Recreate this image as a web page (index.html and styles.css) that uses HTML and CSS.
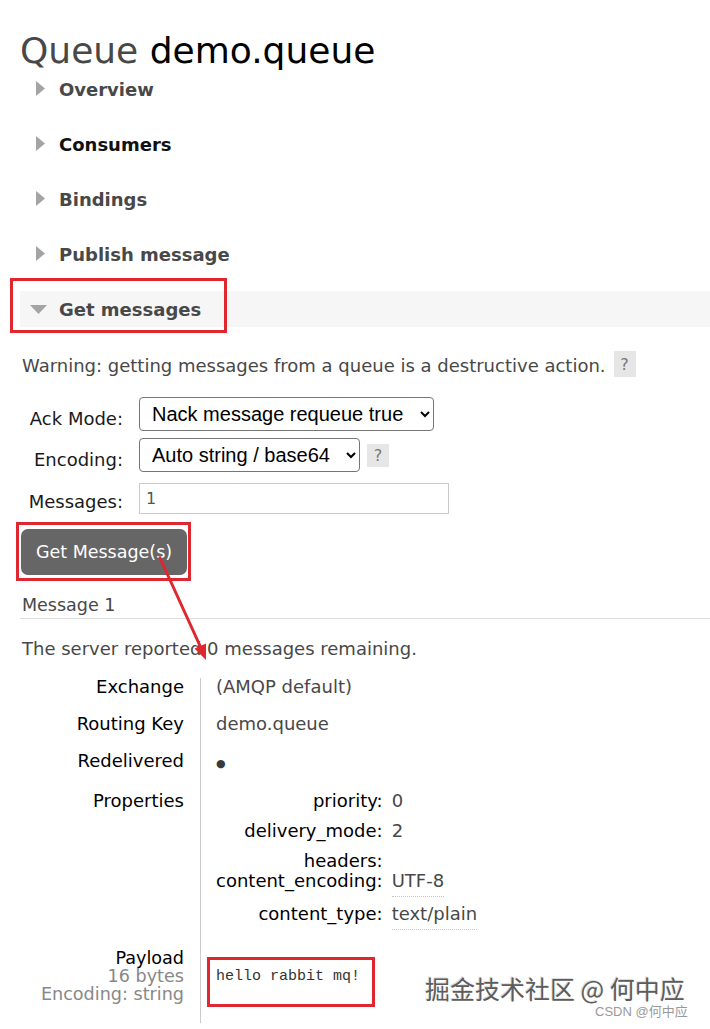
FILE: index.html
```html
<!DOCTYPE html>
<html lang="en">
<head>
<meta charset="utf-8">
<title>Queue demo.queue</title>
<link rel="stylesheet" href="styles.css">
</head>
<body>
<div class="page">
  <h1><span class="kind">Queue</span> demo.queue</h1>

  <div class="sec-head"><svg class="tri" viewBox="0 0 30 18"><polygon points="7,1 16,8.5 7,16"/></svg>Overview</div>
  <div class="sec-head dark"><svg class="tri" viewBox="0 0 30 18"><polygon points="7,1 16,8.5 7,16"/></svg>Consumers</div>
  <div class="sec-head"><svg class="tri" viewBox="0 0 30 18"><polygon points="7,1 16,8.5 7,16"/></svg>Bindings</div>
  <div class="sec-head"><svg class="tri" viewBox="0 0 30 18"><polygon points="7,1 16,8.5 7,16"/></svg>Publish message</div>
  <div class="sec-head open"><svg class="tri" viewBox="0 0 30 18"><polygon points="1,5 18,5 9.5,14"/></svg>Get messages<span class="mark mark-head"></span></div>

  <div class="sec-body">
    <div class="warning"><span class="warning-text">Warning: getting messages from a queue is a destructive action.</span><span class="help">?</span></div>

    <form class="get-form">
      <label class="form-label">Ack Mode:</label>
      <div class="ctrl">
        <select class="select select-ack">
          <option>Nack message requeue true</option>
          <option>Automatic ack</option>
          <option>Reject requeue true</option>
          <option>Reject requeue false</option>
        </select>
      </div>
      <label class="form-label">Encoding:</label>
      <div class="ctrl">
        <select class="select select-enc">
          <option>Auto string / base64</option>
          <option>base64</option>
        </select>
        <span class="help help-sm">?</span>
      </div>
      <label class="form-label">Messages:</label>
      <div class="ctrl">
        <input class="num" type="text" value="1">
      </div>
    </form>

    <div class="btn-wrap">
      <button class="btn" type="button">Get Message(s)</button>
      <span class="mark mark-btn"></span>
    </div>

    <h3 class="msg-title">Message 1</h3>
    <p class="remaining">The server reported 0 messages remaining.</p>

    <table class="msg">
      <tr>
        <th class="k">Exchange</th>
        <td class="v">(AMQP default)</td>
      </tr>
      <tr>
        <th class="k">Routing Key</th>
        <td class="v">demo.queue</td>
      </tr>
      <tr>
        <th class="k">Redelivered</th>
        <td class="v"><span class="dot">●</span></td>
      </tr>
      <tr>
        <th class="k">Properties</th>
        <td class="v">
          <table class="props">
            <tr class="p-row"><th class="pk">priority:</th><td class="pv">0</td></tr>
            <tr class="p-row"><th class="pk">delivery_mode:</th><td class="pv">2</td></tr>
            <tr class="p-row p-short"><th class="pk">headers:</th><td class="pv"></td></tr>
            <tr class="p-row p-tall"><th class="pk">content_encoding:</th><td class="pv"><span class="abbr">UTF-8</span></td></tr>
            <tr class="p-row p-last"><th class="pk">content_type:</th><td class="pv"><span class="abbr">text/plain</span></td></tr>
          </table>
        </td>
      </tr>
      <tr class="last">
        <th class="k pl">
          <span class="pl-main">Payload</span>
          <span class="pl-sub">16 bytes</span>
          <span class="pl-sub">Encoding: string</span>
        </th>
        <td class="v payload-cell"><div class="payload-box">hello rabbit mq!</div></td>
      </tr>
    </table>
  </div>
</div>

<svg class="arrow" viewBox="0 0 710 1029" width="710" height="1029">
  <line x1="160" y1="558" x2="201" y2="648" stroke="#e0262e" stroke-width="3" stroke-linecap="round"/>
  <polygon points="206,660 194.5,648.5 206,643.5" fill="#e0262e"/>
</svg>

<div class="watermark">掘金技术社区 @ 何中应</div>
<div class="csdn">CSDN @何中应</div>
</body>
</html>
```

FILE: styles.css
```css
* {
  box-sizing: border-box;
}

html,
body {
  margin: 0;
  padding: 0;
  background: #fff;
}

body {
  position: relative;
  width: 710px;
  height: 1029px;
  overflow: hidden;
  font-family: "DejaVu Sans", Verdana, sans-serif;
  color: #484848;
}

.page {
  padding: 31px 0 0 20px;
}

h1 {
  margin: 0;
  font-size: 36px;
  line-height: 40px;
  font-weight: normal;
  color: #000;
}

h1 .kind {
  color: #484848;
}

.sec-head {
  position: relative;
  display: flex;
  align-items: center;
  height: 36px;
  margin-bottom: 19px;
  padding-left: 9px;
  font-size: 18px;
  font-weight: bold;
  color: #484848;
}

.sec-head.dark {
  color: #111;
}

.sec-head.open {
  margin-bottom: 0;
  background: #f6f6f6;
}

.tri {
  flex: none;
  width: 30px;
  height: 18px;
  fill: #a4a4a4;
}

.mark {
  position: absolute;
  border: 3px solid #e0262e;
  pointer-events: none;
}

.mark-head {
  left: -10px;
  top: -13px;
  width: 217px;
  height: 55px;
}

.warning {
  display: flex;
  align-items: center;
  height: 26px;
  margin-top: 24px;
  font-size: 18px;
}

.warning-text {
  padding-top: 3px;
  padding-left: 2px;
}

.help {
  display: inline-flex;
  align-items: center;
  justify-content: center;
  width: 22px;
  height: 26px;
  margin-left: 8px;
  background: #e6e6e6;
  color: #777;
  font-size: 16px;
  font-weight: normal;
}

.get-form {
  display: grid;
  grid-template-columns: 103px auto;
  column-gap: 16px;
  row-gap: 7px;
  align-items: end;
  margin-top: 20px;
}

.form-label {
  text-align: right;
  font-size: 18px;
  line-height: 18px;
  padding-bottom: 3px;
  color: #1a1a1a;
}

.ctrl {
  display: flex;
  align-items: center;
}

.select {
  height: 34px;
  padding: 0 4px 0 8px;
  border: 1px solid #767676;
  border-radius: 4px;
  background: #fff;
  color: #000;
  font-family: "Liberation Sans", Arial, sans-serif;
  font-size: 20px;
}

.select-ack {
  width: 295px;
}

.select-enc {
  width: 221px;
}

.help-sm {
  height: 23px;
  margin-left: 7px;
}

.num {
  width: 310px;
  height: 31px;
  margin-top: 4px;
  padding: 0 6px;
  border: 1px solid #ccc;
  border-radius: 0;
  font-family: "DejaVu Sans", Verdana, sans-serif;
  font-size: 16px;
  color: #4a5a4c;
}

.btn-wrap {
  position: relative;
  width: fit-content;
  margin: 15px 0 0 1px;
}

.btn {
  display: block;
  width: 166px;
  height: 46px;
  padding: 0;
  border: 0;
  border-radius: 7px;
  background: #666;
  color: #fff;
  font-family: "DejaVu Sans", Verdana, sans-serif;
  font-size: 17.5px;
}

.mark-btn {
  left: -5px;
  top: -7px;
  right: -4px;
  bottom: -6px;
}

.msg-title {
  margin: 19px 0 0;
  padding: 0 0 2px 2px;
  border-bottom: 1px solid #ddd;
  font-size: 17.5px;
  line-height: 22px;
  font-weight: normal;
  color: #484848;
}

.remaining {
  margin: 19px 0 0;
  padding-left: 2px;
  font-size: 18px;
  line-height: 22px;
}

.msg {
  margin-top: 18px;
  border-collapse: separate;
  border-spacing: 0;
  font-size: 18px;
  line-height: 18px;
}

.k {
  box-sizing: content-box;
  width: 164px;
  padding: 0 16px 19px 0;
  text-align: right;
  vertical-align: top;
  font-weight: normal;
  color: #000;
}

.v {
  padding: 0 0 19px 15px;
  border-left: 1px solid #ccc;
  vertical-align: top;
  color: #484848;
}

.dot {
  font-size: 11px;
  color: #3a3a3a;
}

.props {
  border-collapse: separate;
  border-spacing: 0;
}

.pk {
  box-sizing: content-box;
  width: 160px;
  padding: 0 9px 12px 0;
  text-align: right;
  vertical-align: top;
  font-weight: normal;
  color: #000;
}

.pv {
  padding: 0 0 12px 0;
  vertical-align: top;
  color: #484848;
}

.p-short .pk,
.p-short .pv {
  padding-bottom: 2px;
}

.p-tall .pk,
.p-tall .pv {
  padding-bottom: 15px;
}

.p-last .pk,
.p-last .pv {
  padding-bottom: 7px;
}

.abbr {
  padding-bottom: 5px;
  border-bottom: 1px dotted #c8c8c8;
}

.last .k,
.last .v {
  padding-bottom: 16px;
}

.pl {
  font-size: 17.6px;
}

.pl-main,
.pl-sub {
  display: block;
}

.pl-sub {
  color: #888;
}

.payload-cell {
  padding-left: 6px;
}

.payload-box {
  width: 168px;
  height: 50px;
  margin-top: 8px;
  padding: 8px 6px 0;
  border: 3px solid #e0262e;
  font-family: "Liberation Mono", "Courier New", monospace;
  font-size: 15px;
  line-height: 18px;
  color: #333;
  white-space: pre;
}

.arrow {
  position: absolute;
  left: 0;
  top: 0;
  pointer-events: none;
}

.watermark {
  position: absolute;
  left: 425px;
  top: 972px;
  font-family: "Noto Sans CJK SC", "DejaVu Sans", sans-serif;
  font-size: 25px;
  line-height: 32px;
  color: #5c5c5c;
  text-shadow: 1px 1px 0 #fff, -1px -1px 0 #ddd;
  white-space: nowrap;
}

.csdn {
  position: absolute;
  left: 595px;
  top: 1003px;
  font-family: "Liberation Sans", "Noto Sans CJK SC", sans-serif;
  font-size: 13px;
  line-height: 18px;
  color: #999;
  white-space: nowrap;
}
```
